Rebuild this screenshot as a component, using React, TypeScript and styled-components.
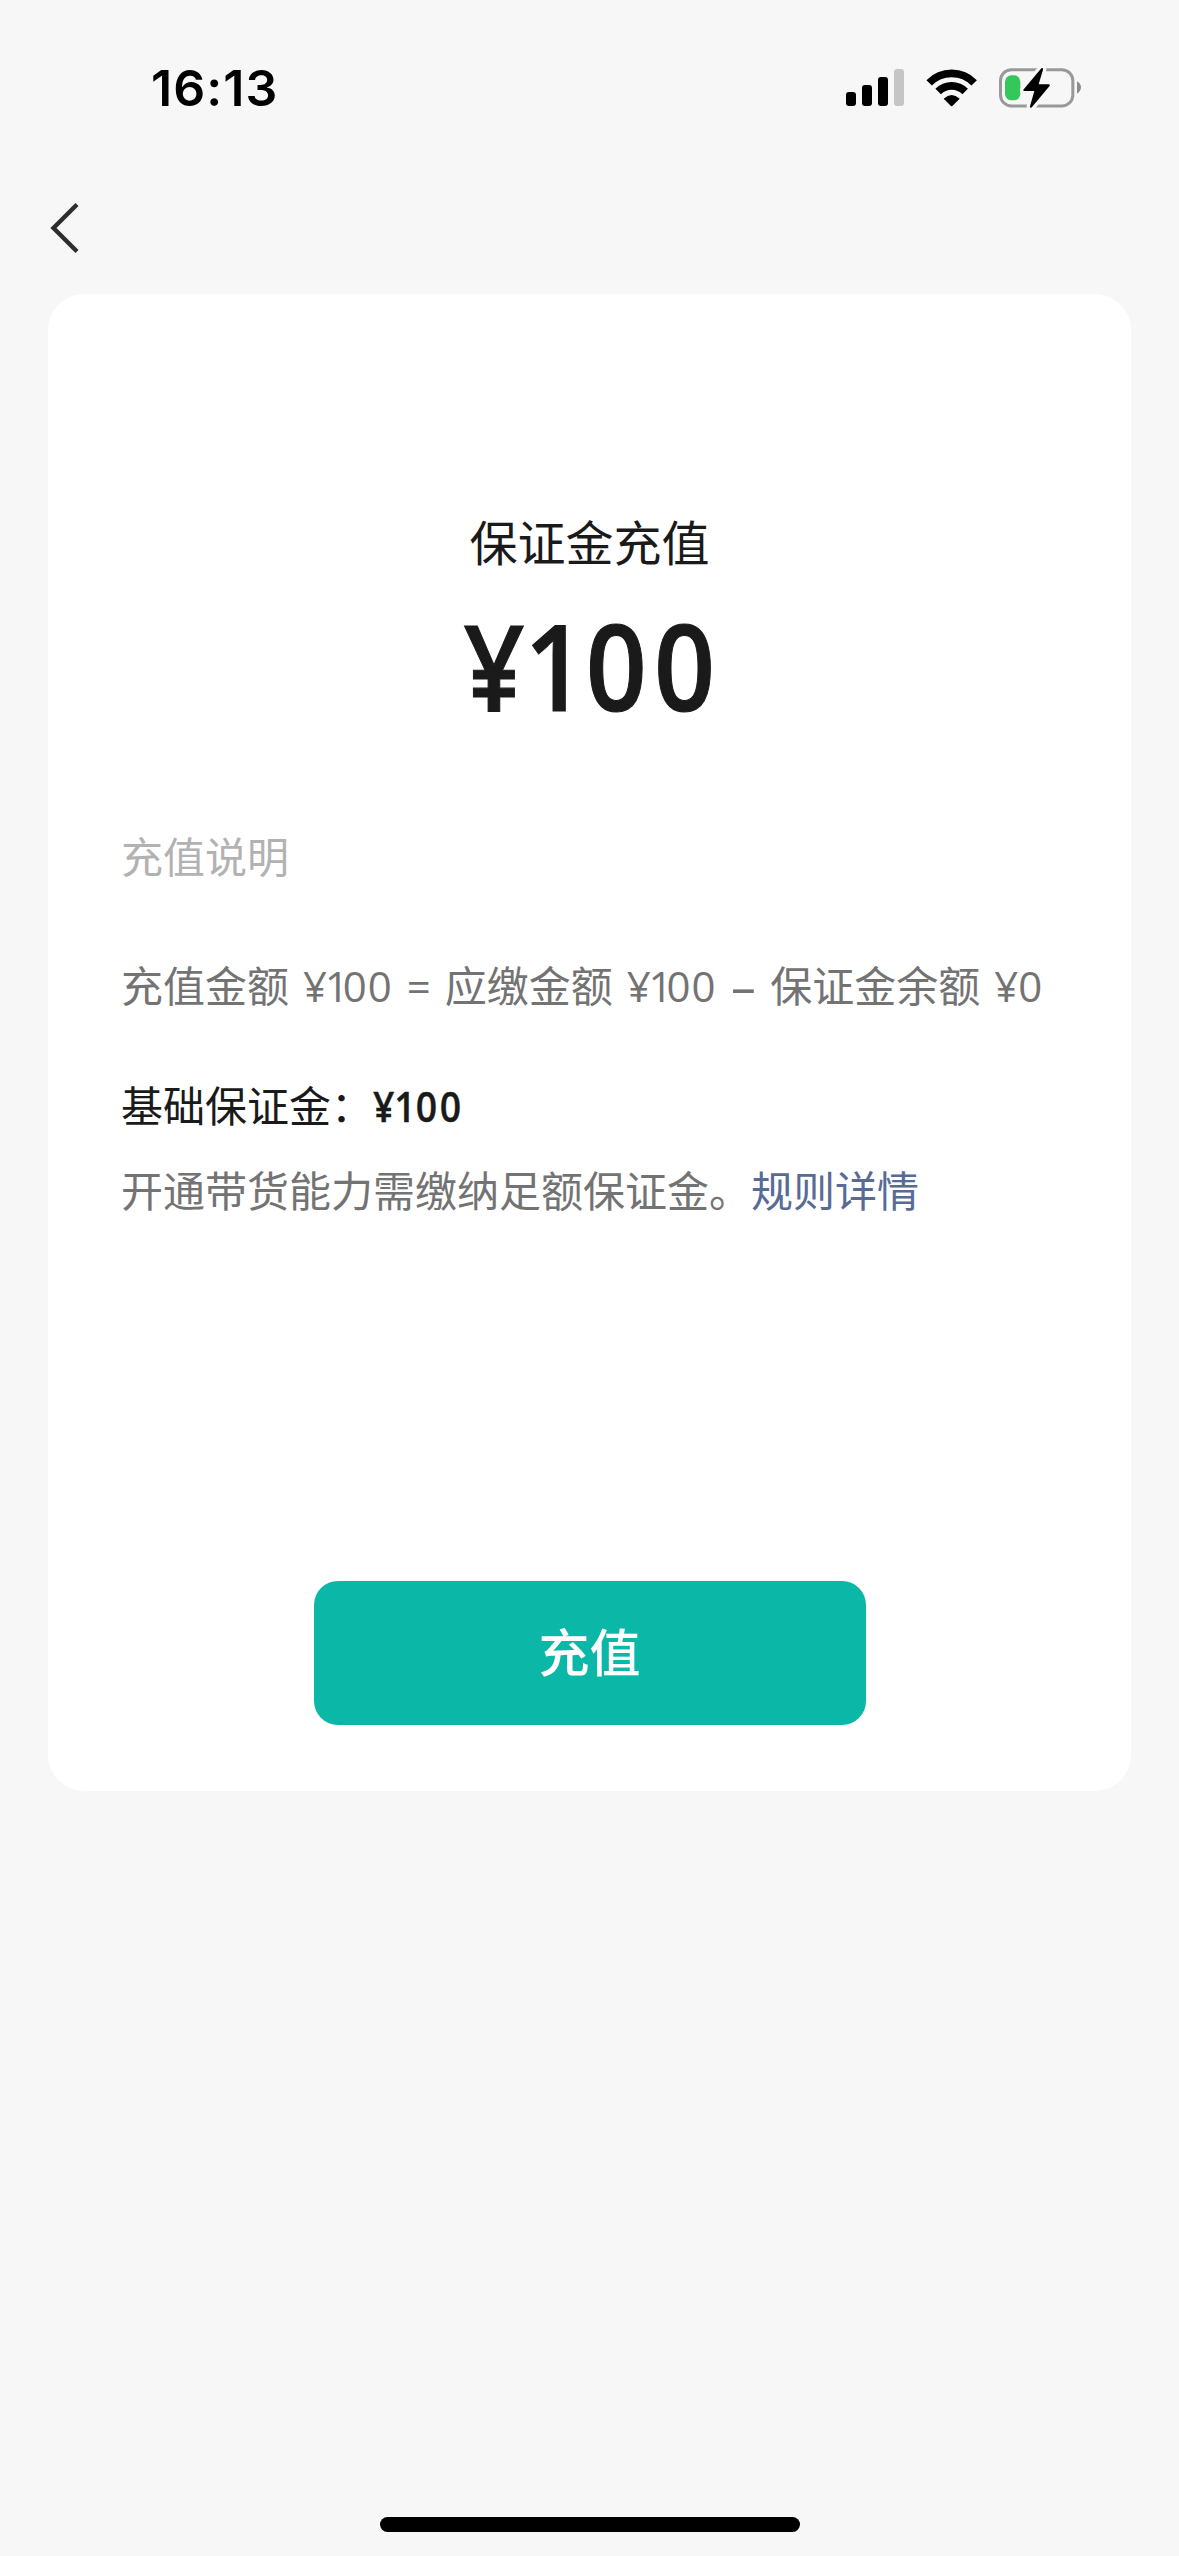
import React from 'react';
import styled, { createGlobalStyle } from 'styled-components';

const GlobalStyle = createGlobalStyle`
  * { box-sizing: border-box; }
  body { margin: 0; background: #f7f7f7; }
`;

const Screen = styled.div`
  display: flex;
  flex-direction: column;
  width: 1179px;
  height: 2556px;
  background: #f7f7f7;
  color: #1a1a1a;
  font-family: 'Open Sans', 'Noto Sans CJK SC', sans-serif;
`;

const StatusBar = styled.header`
  display: flex;
  align-items: center;
  justify-content: space-between;
  height: 175px;
  padding: 0 97px 0 151px;
`;

const Clock = styled.time`
  font: 600 50px/60px Inter, sans-serif;
  letter-spacing: 1.1px;
  color: #000;
`;

const StatusIcons = styled.div`
  display: flex;
  align-items: center;
  gap: 21.5px;

  svg { display: block; }
`;

const NavBar = styled.nav`
  display: flex;
  align-items: center;
  height: 119px;
  padding: 0 0 13px 48px;
`;

const BackButton = styled.button`
  display: flex;
  padding: 0;
  border: 0;
  background: none;
`;

const Card = styled.main`
  display: flex;
  flex-direction: column;
  align-items: center;
  width: 1083px;
  height: 1497px;
  margin: 0 48px;
  padding: 214px 73px 66px;
  border-radius: 36px;
  background: #fff;
`;

const Title = styled.h1`
  margin: 0;
  font-size: 48px;
  font-weight: 400;
  line-height: 70px;
`;

const Amount = styled.div`
  margin-top: 17px;
  font-size: 120px;
  line-height: 140px;
`;

const Details = styled.section`
  align-self: stretch;
  display: flex;
  flex-direction: column;
  margin-top: 92px;
  font-size: 42px;
  line-height: 60px;
  white-space: nowrap;
`;

const Line = styled.p<{ $color: string; $gap?: number }>`
  margin: ${({ $gap = 0 }) => $gap}px 0 0;
  color: ${({ $color }) => $color};
  word-spacing: 3px;
`;

const BoldPrice = styled.span<{ $origin: string }>`
  display: inline-block;
  font-weight: 600;
  transform: scaleX(0.89);
  transform-origin: ${({ $origin }) => $origin};
  -webkit-text-stroke: 0.009em currentColor;
`;

const Tracked = styled.span<{ $em: number }>`
  letter-spacing: ${({ $em }) => $em}em;
`;

const Dash = styled.span`
  margin: 0 0.5px;
  font-size: 1.18em;
  line-height: 0;
  vertical-align: -0.06em;
`;

const RuleLink = styled.a`
  color: #576b95;
`;

const PayButton = styled.button`
  width: 552px;
  height: 144px;
  margin-top: auto;
  padding: 0 0 6px;
  border: 0;
  border-radius: 24px;
  background: #0bb8a7;
  color: #fff;
  font: 500 51px/72px 'Noto Sans CJK SC', sans-serif;
`;

const HomeIndicator = styled.div`
  width: 420px;
  height: 15px;
  margin: auto auto 24px;
  border-radius: 8px;
  background: #000;
`;

const Signal = () => (
  <svg width="58" height="37" viewBox="0 0 58 37">
    <rect x="0" y="23" width="10" height="14" rx="3" />
    <rect x="16" y="16" width="10" height="21" rx="3" />
    <rect x="32" y="8" width="10" height="29" rx="3" />
    <rect x="48" y="0" width="10" height="37" rx="3" fill="#c5c5c5" />
  </svg>
);

const Wifi = () => (
  <svg width="51" height="38" viewBox="317 56 153 114">
    <g fill="none" stroke="#000" strokeWidth="23">
      <path d="M326.5 97.5A94.5 94.5 0 0 1 461.5 97.5" />
      <path d="M353.5 123.5A56.5 56.5 0 0 1 434.5 123.5" />
    </g>
    <path d="M370 145Q394 123 418 145L396 167Q394 169 392 167Z" />
  </svg>
);

const Battery = () => (
  <svg width="84" height="42" viewBox="534 50 252 126">
    <rect x="541.5" y="58" width="217" height="109" rx="33" fill="none" stroke="#999" strokeWidth="9" />
    <path d="M771 93Q783 100 783 111T771 130Z" fill="#8c8c8c" />
    <rect x="555" y="75" width="46" height="75" rx="19" fill="#34c759" />
    <path
      d="M664 54Q670 50 669 58L656 102H686Q692 103 688 108L636 170Q630 176 630 168L643 122H613Q607 121 612 116Z"
      stroke="#f7f7f7"
      strokeWidth="20"
      paintOrder="stroke"
    />
  </svg>
);

const BackIcon = () => (
  <svg width="32" height="52" viewBox="0 0 32 52" fill="none">
    <path d="M29 2.5L5.5 26L29 49.5" stroke="#2e2e2e" strokeWidth="4.4" />
  </svg>
);

const Hundred = () => (
  <>
    <Tracked $em={-0.055}>¥</Tracked>
    <Tracked $em={-0.14}>1</Tracked>
    <Tracked $em={0.025}>00</Tracked>
  </>
);

const BoldHundred = ({ origin }: { origin: string }) => (
  <BoldPrice $origin={origin}>
    ¥1<Tracked $em={0.068}>0</Tracked>0
  </BoldPrice>
);

export default function App() {
  return (
    <Screen>
      <GlobalStyle />
      <StatusBar>
        <Clock>16:13</Clock>
        <StatusIcons>
          <Signal />
          <Wifi />
          <Battery />
        </StatusIcons>
      </StatusBar>
      <NavBar>
        <BackButton aria-label="返回">
          <BackIcon />
        </BackButton>
      </NavBar>
      <Card>
        <Title>保证金充值</Title>
        <Amount>
          <BoldHundred origin="center" />
        </Amount>
        <Details>
          <Line $color="#b2b2b2">充值说明</Line>
          <Line $color="#737373" $gap={69}>
            充值金额 <Hundred /> = 应缴金额 <Hundred /> <Dash>–</Dash> 保证金余额{' '}
            <Tracked $em={0}>¥</Tracked>0
          </Line>
          <Line $color="#1a1a1a" $gap={60}>
            基础保证金：<BoldHundred origin="left" />
          </Line>
          <Line $color="#737373" $gap={25}>
            开通带货能力需缴纳足额保证金。<RuleLink>规则详情</RuleLink>
          </Line>
        </Details>
        <PayButton>充值</PayButton>
      </Card>
      <HomeIndicator />
    </Screen>
  );
}
